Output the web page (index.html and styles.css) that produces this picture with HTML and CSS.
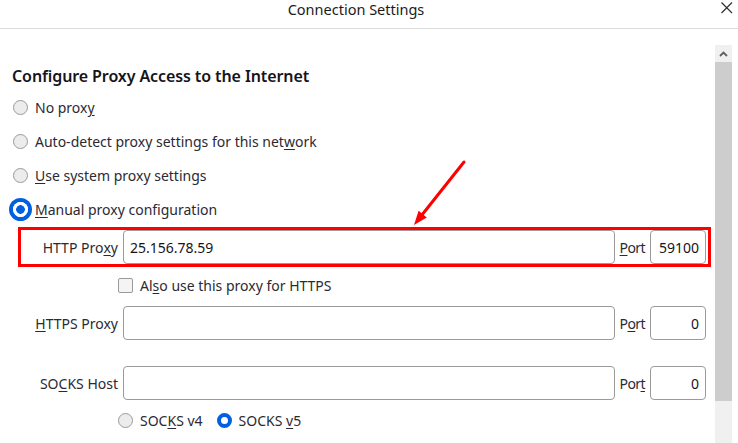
FILE: index.html
```html
<!DOCTYPE html>
<html>
<head>
<meta charset="utf-8">
<title>Connection Settings</title>
<link rel="stylesheet" href="styles.css">
</head>
<body>
<div class="titlebar">
  <div class="title">Connection Settings</div>
  <div class="close">
    <svg width="12" height="12" viewBox="0 0 12 12"><path d="M0.5 0.5 L11 11 M11 0.5 L0.5 11" stroke="#2b2b2b" stroke-width="1.1" fill="none"/></svg>
  </div>
</div>
<div class="body">
  <div class="main">
    <h1 class="heading">Configure Proxy Access to the Internet</h1>
    <div class="radio-row"><span class="radio"></span><span>No prox<u>y</u></span></div>
    <div class="radio-row"><span class="radio"></span><span>Auto-detect proxy settings for this net<u>w</u>ork</span></div>
    <div class="radio-row"><span class="radio"></span><span><u>U</u>se system proxy settings</span></div>
    <div class="radio-row"><span class="radio focused"></span><span><u>M</u>anual proxy configuration</span></div>

    <div class="proxy-row highlight">
      <label class="plabel">HTTP Pro<u>x</u>y</label>
      <div class="input host">25.156.78.59</div>
      <label class="portlabel"><u>P</u>ort</label>
      <div class="input port">59100</div>
    </div>
    <div class="check-row"><span class="checkbox"></span><span>Al<u>s</u>o use this proxy for HTTPS</span></div>
    <div class="proxy-row">
      <label class="plabel"><u>H</u>TTPS Proxy</label>
      <div class="input host"></div>
      <label class="portlabel">P<u>o</u>rt</label>
      <div class="input port">0</div>
    </div>
    <div class="proxy-row socks">
      <label class="plabel">SO<u>C</u>KS Host</label>
      <div class="input host"></div>
      <label class="portlabel">Por<u>t</u></label>
      <div class="input port">0</div>
    </div>
    <div class="socks-row">
      <span class="radio"></span><span class="socks-text">SOC<u>K</u>S v4</span>
      <span class="radio checked"></span><span>SOCKS <u>v</u>5</span>
    </div>
  </div>
  <div class="scrollbar">
    <div class="sb-up">
      <svg width="9" height="6" viewBox="0 0 9 6"><path d="M1 5 L4.5 1.5 L8 5" stroke="#5f5f5f" stroke-width="1.8" fill="none"/></svg>
    </div>
    <div class="sb-thumb"></div>
    <div class="sb-track"></div>
  </div>
</div>
<svg class="arrow" width="738" height="443" viewBox="0 0 738 443">
  <line x1="464" y1="162" x2="421.5" y2="215.5" stroke="#ff0000" stroke-width="3" stroke-linecap="round"/>
  <polygon points="414,225 426.8,217.5 418.6,210.8" fill="#ff0000"/>
</svg>
</body>
</html>
```
FILE: styles.css
```css
html, body {
  margin: 0;
  padding: 0;
  background: #ffffff;
}
body {
  width: 738px;
  height: 443px;
  overflow: hidden;
  position: relative;
  font-family: "Noto Sans", "Open Sans", sans-serif;
  font-size: 14px;
  color: #2b2a33;
}
u {
  text-decoration: underline;
  text-underline-offset: 2px;
}
.titlebar {
  display: flex;
  height: 28px;
  border-bottom: 1px solid #dcdcdc;
}
.title {
  flex: 1;
  text-align: center;
  font-size: 14.5px;
  line-height: 19px;
  color: #1b1b1b;
}
.close {
  width: 26px;
  display: flex;
  justify-content: flex-start;
  padding-top: 2px;
  padding-left: 9px;
  box-sizing: border-box;
}
.body {
  display: flex;
  height: 414px;
}
.main {
  flex: 1;
  padding-left: 12px;
  display: flex;
  flex-direction: column;
}
.heading {
  margin: 37px 0 0 0;
  font-size: 16px;
  line-height: 20px;
  font-weight: 600;
  color: #15141a;
  letter-spacing: -0.1px;
}
.radio-row {
  display: flex;
  align-items: center;
  height: 34px;
  gap: 7px;
  padding-left: 1px;
}
.heading + .radio-row {
  margin-top: 4px;
}
.radio {
  width: 15px;
  height: 15px;
  box-sizing: border-box;
  border-radius: 50%;
  border: 1px solid #9a9a9a;
  background: #ececec;
  flex: none;
}
.radio.focused {
  border: none;
  background: radial-gradient(circle, #0060df 0 4px, #ffffff 4.6px);
  box-shadow: 0 0 0 4px #0060df;
}
.radio.checked {
  border: 4px solid #0060df;
  background: #ffffff;
}
.proxy-row {
  display: flex;
  align-items: stretch;
  height: 40px;
  box-sizing: border-box;
  border: 3px solid transparent;
  margin: 0 4px 0 6px;
}
.proxy-row.highlight {
  border-color: #ff0000;
  margin-top: 1px;
}
.proxy-row.socks {
  margin-top: 20px;
}
.plabel {
  width: 97px;
  text-align: right;
  margin-right: 5px;
  display: flex;
  align-items: center;
  justify-content: flex-end;
  white-space: nowrap;
}
.portlabel {
  display: flex;
  align-items: center;
  margin: 0 5px 0 5px;
  letter-spacing: -0.6px;
}
.input {
  box-sizing: border-box;
  border: 1px solid #9b9b9b;
  border-radius: 4px;
  display: flex;
  align-items: center;
  padding: 0 6px;
  color: #15141a;
  background: #fff;
}
.input.host {
  flex: 1;
}
.input.port {
  width: 56px;
  justify-content: flex-end;
  margin-right: 2px;
}
.check-row {
  display: flex;
  align-items: center;
  height: 36px;
  padding-left: 106px;
  gap: 7px;
}
.checkbox {
  width: 15px;
  height: 15px;
  box-sizing: border-box;
  border: 1px solid #9a9a9a;
  border-radius: 2px;
  background: #f4f4f4;
}
.socks-row {
  display: flex;
  align-items: center;
  height: 34px;
  padding-left: 106px;
  gap: 7px;
}
.socks-text {
  margin-right: 7px;
}
.scrollbar {
  width: 17px;
  margin-top: 16px;
  margin-right: 6px;
  display: flex;
  flex-direction: column;
}
.sb-up {
  height: 17px;
  background: #f0f0f0;
  display: flex;
  align-items: center;
  justify-content: center;
}
.sb-thumb {
  height: 339px;
  background: #cdcdcd;
}
.sb-track {
  flex: 1;
  background: #f0f0f0;
}
.arrow {
  position: absolute;
  left: 0;
  top: 0;
  pointer-events: none;
}
```
